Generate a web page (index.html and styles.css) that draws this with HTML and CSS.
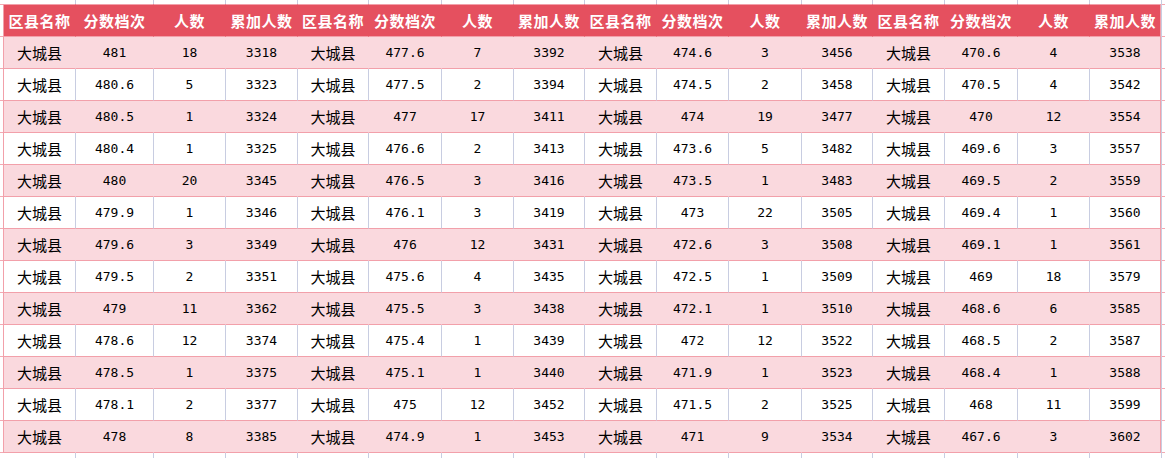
FILE: index.html
```html
<!DOCTYPE html>
<html lang="zh-CN">
<head>
<meta charset="utf-8">
<title>分数档次</title>
<link rel="stylesheet" href="styles.css">
</head>
<body>
<div class="sheet">
  <div class="grid">
    <div class="row spacer"><div></div><div></div><div></div><div></div><div></div><div></div><div></div><div></div><div></div><div></div><div></div><div></div><div></div><div></div><div></div><div></div></div>
    <div class="row head">
      <div>区县名称</div><div>分数档次</div><div>人数</div><div>累加人数</div>
      <div>区县名称</div><div>分数档次</div><div>人数</div><div>累加人数</div>
      <div>区县名称</div><div>分数档次</div><div>人数</div><div>累加人数</div>
      <div>区县名称</div><div>分数档次</div><div>人数</div><div>累加人数</div>
    </div>
    <div class="row pink">
      <div class="t">大城县</div><div class="n">481</div><div class="n">18</div><div class="n">3318</div>
      <div class="t">大城县</div><div class="n">477.6</div><div class="n">7</div><div class="n">3392</div>
      <div class="t">大城县</div><div class="n">474.6</div><div class="n">3</div><div class="n">3456</div>
      <div class="t">大城县</div><div class="n">470.6</div><div class="n">4</div><div class="n">3538</div>
    </div>
    <div class="row white">
      <div class="t">大城县</div><div class="n">480.6</div><div class="n">5</div><div class="n">3323</div>
      <div class="t">大城县</div><div class="n">477.5</div><div class="n">2</div><div class="n">3394</div>
      <div class="t">大城县</div><div class="n">474.5</div><div class="n">2</div><div class="n">3458</div>
      <div class="t">大城县</div><div class="n">470.5</div><div class="n">4</div><div class="n">3542</div>
    </div>
    <div class="row pink">
      <div class="t">大城县</div><div class="n">480.5</div><div class="n">1</div><div class="n">3324</div>
      <div class="t">大城县</div><div class="n">477</div><div class="n">17</div><div class="n">3411</div>
      <div class="t">大城县</div><div class="n">474</div><div class="n">19</div><div class="n">3477</div>
      <div class="t">大城县</div><div class="n">470</div><div class="n">12</div><div class="n">3554</div>
    </div>
    <div class="row white">
      <div class="t">大城县</div><div class="n">480.4</div><div class="n">1</div><div class="n">3325</div>
      <div class="t">大城县</div><div class="n">476.6</div><div class="n">2</div><div class="n">3413</div>
      <div class="t">大城县</div><div class="n">473.6</div><div class="n">5</div><div class="n">3482</div>
      <div class="t">大城县</div><div class="n">469.6</div><div class="n">3</div><div class="n">3557</div>
    </div>
    <div class="row pink">
      <div class="t">大城县</div><div class="n">480</div><div class="n">20</div><div class="n">3345</div>
      <div class="t">大城县</div><div class="n">476.5</div><div class="n">3</div><div class="n">3416</div>
      <div class="t">大城县</div><div class="n">473.5</div><div class="n">1</div><div class="n">3483</div>
      <div class="t">大城县</div><div class="n">469.5</div><div class="n">2</div><div class="n">3559</div>
    </div>
    <div class="row white">
      <div class="t">大城县</div><div class="n">479.9</div><div class="n">1</div><div class="n">3346</div>
      <div class="t">大城县</div><div class="n">476.1</div><div class="n">3</div><div class="n">3419</div>
      <div class="t">大城县</div><div class="n">473</div><div class="n">22</div><div class="n">3505</div>
      <div class="t">大城县</div><div class="n">469.4</div><div class="n">1</div><div class="n">3560</div>
    </div>
    <div class="row pink">
      <div class="t">大城县</div><div class="n">479.6</div><div class="n">3</div><div class="n">3349</div>
      <div class="t">大城县</div><div class="n">476</div><div class="n">12</div><div class="n">3431</div>
      <div class="t">大城县</div><div class="n">472.6</div><div class="n">3</div><div class="n">3508</div>
      <div class="t">大城县</div><div class="n">469.1</div><div class="n">1</div><div class="n">3561</div>
    </div>
    <div class="row white">
      <div class="t">大城县</div><div class="n">479.5</div><div class="n">2</div><div class="n">3351</div>
      <div class="t">大城县</div><div class="n">475.6</div><div class="n">4</div><div class="n">3435</div>
      <div class="t">大城县</div><div class="n">472.5</div><div class="n">1</div><div class="n">3509</div>
      <div class="t">大城县</div><div class="n">469</div><div class="n">18</div><div class="n">3579</div>
    </div>
    <div class="row pink">
      <div class="t">大城县</div><div class="n">479</div><div class="n">11</div><div class="n">3362</div>
      <div class="t">大城县</div><div class="n">475.5</div><div class="n">3</div><div class="n">3438</div>
      <div class="t">大城县</div><div class="n">472.1</div><div class="n">1</div><div class="n">3510</div>
      <div class="t">大城县</div><div class="n">468.6</div><div class="n">6</div><div class="n">3585</div>
    </div>
    <div class="row white">
      <div class="t">大城县</div><div class="n">478.6</div><div class="n">12</div><div class="n">3374</div>
      <div class="t">大城县</div><div class="n">475.4</div><div class="n">1</div><div class="n">3439</div>
      <div class="t">大城县</div><div class="n">472</div><div class="n">12</div><div class="n">3522</div>
      <div class="t">大城县</div><div class="n">468.5</div><div class="n">2</div><div class="n">3587</div>
    </div>
    <div class="row pink">
      <div class="t">大城县</div><div class="n">478.5</div><div class="n">1</div><div class="n">3375</div>
      <div class="t">大城县</div><div class="n">475.1</div><div class="n">1</div><div class="n">3440</div>
      <div class="t">大城县</div><div class="n">471.9</div><div class="n">1</div><div class="n">3523</div>
      <div class="t">大城县</div><div class="n">468.4</div><div class="n">1</div><div class="n">3588</div>
    </div>
    <div class="row white">
      <div class="t">大城县</div><div class="n">478.1</div><div class="n">2</div><div class="n">3377</div>
      <div class="t">大城县</div><div class="n">475</div><div class="n">12</div><div class="n">3452</div>
      <div class="t">大城县</div><div class="n">471.5</div><div class="n">2</div><div class="n">3525</div>
      <div class="t">大城县</div><div class="n">468</div><div class="n">11</div><div class="n">3599</div>
    </div>
    <div class="row pink">
      <div class="t">大城县</div><div class="n">478</div><div class="n">8</div><div class="n">3385</div>
      <div class="t">大城县</div><div class="n">474.9</div><div class="n">1</div><div class="n">3453</div>
      <div class="t">大城县</div><div class="n">471</div><div class="n">9</div><div class="n">3534</div>
      <div class="t">大城县</div><div class="n">467.6</div><div class="n">3</div><div class="n">3602</div>
    </div>
    <div class="row spacer bottom"><div></div><div></div><div></div><div></div><div></div><div></div><div></div><div></div><div></div><div></div><div></div><div></div><div></div><div></div><div></div><div></div></div>
  </div>
</div>
</body>
</html>
```

FILE: styles.css
```css
html, body {
  margin: 0;
  padding: 0;
  background: #ffffff;
}

.sheet {
  width: 1165px;
  height: 458px;
  overflow: hidden;
  background:
    linear-gradient(to right, transparent 1161px, #c8cde1 1161px, #c8cde1 1162px, transparent 1162px),
    repeating-linear-gradient(to bottom, transparent 0, transparent 4px, #f3a9b2 4px, #f3a9b2 5px, transparent 5px, transparent 32px);
}

.grid {
  display: grid;
  grid-template-columns: 73px 78px 72px 72px 71px 73px 72px 71px 72px 72px 73px 71px 72px 73px 72px 71px;
  margin-left: 3px;
  width: 1158px;
  background: #ffffff;
}

.row {
  display: contents;
}

.row > div {
  box-sizing: border-box;
  height: 32px;
  display: flex;
  align-items: center;
  justify-content: center;
  border-right: 1px solid #c8cde1;
  border-bottom: 1px solid #f2a0aa;
  white-space: nowrap;
  color: #000000;
}

.row > div:first-child {
  border-left: 1px solid #f2a0aa;
}

.row > div:last-child {
  border-right: 1px solid #f2a0aa;
}

.spacer > div {
  height: 4px;
  border-bottom: 0;
  background: #ffffff;
}

.spacer > div:first-child {
  border-left: 1px solid transparent;
}

.spacer > div:last-child {
  border-right: 1px solid transparent;
}

.spacer.bottom > div {
  height: 6px;
}

.head > div {
  height: 33px;
  background: #e5505f;
  border-top: 1px solid #f2a0aa;
  border-right-color: #e5505f;
  color: #ffffff;
  font-family: "Noto Sans CJK SC", "Noto Sans", sans-serif;
  font-weight: 700;
  font-size: 15px;
  letter-spacing: 0.5px;
}

.pink > div {
  background: #fad9de;
  border-right-color: #fad9de;
}

.white > div {
  background: #ffffff;
}

.t {
  font-family: "Noto Sans CJK SC", "Noto Sans", sans-serif;
  font-size: 15px;
}

.n {
  font-family: "DejaVu Sans Mono", "Liberation Mono", monospace;
  font-size: 13px;
}
```
